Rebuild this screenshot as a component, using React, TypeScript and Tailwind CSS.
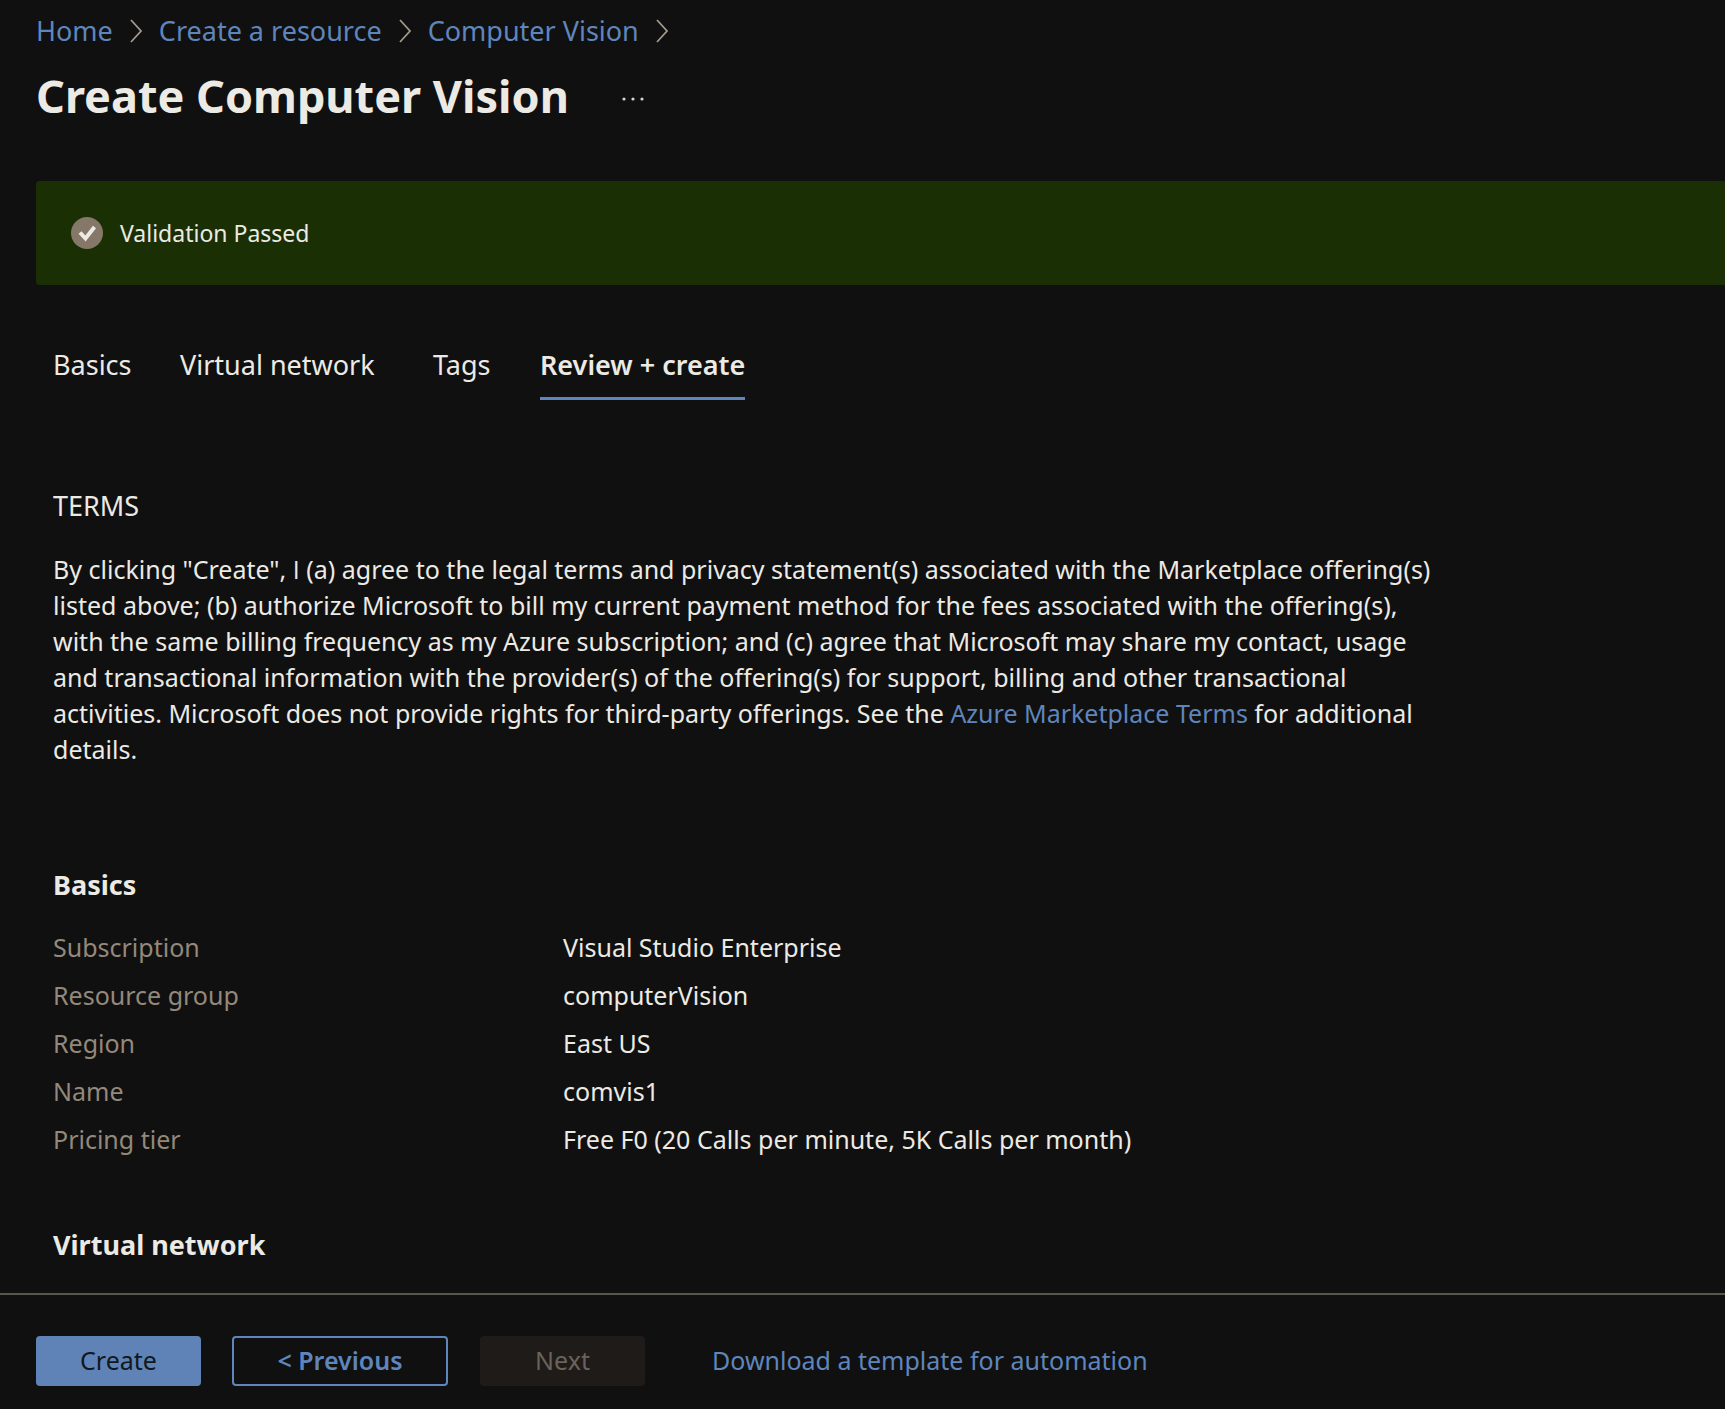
import React from "react";

const crumbs = ["Home", "Create a resource", "Computer Vision"];

const tabs = [
  { label: "Basics", cell: "w-[127px]" },
  { label: "Virtual network", cell: "w-[253px]" },
  { label: "Tags", cell: "w-[107px]" },
  { label: "Review + create", cell: "" },
];

const basics = [
  ["Subscription", "Visual Studio Enterprise"],
  ["Resource group", "computerVision"],
  ["Region", "East US"],
  ["Name", "comvis1"],
  ["Pricing tier", "Free F0 (20 Calls per minute, 5K Calls per month)"],
];

function Chevron() {
  return (
    <svg className="mx-[17px] h-6 w-3 shrink-0" viewBox="0 0 12 24" fill="none" stroke="#a3998c" strokeWidth="1.8" aria-hidden="true">
      <path d="M1 1 L11 12 L1 23" />
    </svg>
  );
}

export default function App() {
  return (
    <div className="flex min-h-screen flex-col bg-[#101010] font-['Noto_Sans','Open_Sans',sans-serif] text-[25px] text-[#eceae4]">
      <header className="pl-9">
        <nav aria-label="Breadcrumb" className="pt-[11px]">
          <ol className="flex items-center text-[27px] leading-10 text-[#5f86bc]">
            {crumbs.map((c) => (
              <li key={c} className="flex items-center">
                <a href="#" className="whitespace-nowrap">{c}</a>
                <Chevron />
              </li>
            ))}
          </ol>
        </nav>
        <div className="flex items-center pt-[17px]">
          <h1 className="text-[45px] leading-14 font-bold whitespace-nowrap">Create Computer Vision</h1>
          <button type="button" aria-label="More actions" className="mt-1 ml-12 p-1">
            <svg className="h-4 w-6" viewBox="0 0 24 16" fill="#d8d4cc" aria-hidden="true">
              <circle cx="3" cy="9" r="1.6" />
              <circle cx="12" cy="9" r="1.6" />
              <circle cx="21" cy="9" r="1.6" />
            </svg>
          </button>
        </div>
        <div role="status" className="mt-[57px] flex h-26 items-center gap-[17px] rounded-l-sm bg-[#1a3004] pl-[35px] text-[23px]">
          <svg className="size-8" viewBox="0 0 32 32" aria-hidden="true">
            <circle cx="16" cy="16" r="16" fill="#857868" />
            <path d="M9 15.5 L14.5 21.5 L23.5 10" fill="none" stroke="#eceae4" strokeWidth="4" />
          </svg>
          <span>Validation Passed</span>
        </div>
      </header>

      <main className="flex-1 px-[53px]">
        <div role="tablist" className="flex pt-15 text-[27px] leading-10">
          {tabs.map((t, i) => (
            <div key={t.label} role="presentation" className={t.cell}>
              <button
                type="button"
                role="tab"
                aria-selected={i === 3}
                className={
                  i === 3
                    ? "border-b-3 border-[#5f86bc] pb-3 font-semibold whitespace-nowrap"
                    : "border-b-3 border-transparent pb-3 whitespace-nowrap"
                }
              >
                {t.label}
              </button>
            </div>
          ))}
        </div>

        <section className="pt-[86px]">
          <h2 className="text-[27px] leading-10">TERMS</h2>
          <p className="max-w-[1395px] pt-[25px] leading-9">
            By clicking "Create", <span className="font-['Open_Sans',sans-serif]">I</span> (a) agree to the legal terms and privacy statement(s) associated with the Marketplace offering(s)
            listed above; (b) authorize Microsoft to bill my current payment method for the fees associated with the offering(s),
            with the same billing frequency as my Azure subscription; and (c) agree that Microsoft may share my contact, usage
            and transactional information with the provider(s) of the offering(s) for support, billing and other transactional
            activities. Microsoft does not provide rights for third-party offerings. See the{" "}
            <a href="#" className="text-[#5f86bc]">Azure Marketplace Terms</a> for additional details.
          </p>
        </section>

        <section className="pt-[98px]">
          <h2 className="text-[27px] leading-10 font-bold">Basics</h2>
          <dl className="pt-[19px]">
            {basics.map(([k, v]) => (
              <div key={k} className="flex h-12 items-center">
                <dt className="w-[510px] text-[#94887b]">{k}</dt>
                <dd>{v}</dd>
              </div>
            ))}
          </dl>
        </section>

        <section className="pt-[61px] pb-7">
          <h2 className="text-[27px] leading-10 font-bold">Virtual network</h2>
        </section>
      </main>

      <footer className="sticky bottom-0 flex items-center border-t-2 border-[#59554f] bg-[#101010] pt-[41px] pb-[23px] pl-9">
        <button type="button" className="h-[50px] w-[165px] rounded-sm bg-[#5f83b6] text-[#101820]">Create</button>
        <button type="button" className="ml-[31px] h-[50px] w-[216px] rounded-sm border-2 border-[#5f86bc] font-semibold text-[#5f86bc]">&lt; Previous</button>
        <button type="button" disabled className="ml-8 h-[50px] w-[165px] rounded-sm bg-[#1e1b19] text-[#6b625a]">Next</button>
        <a href="#" className="ml-[67px] whitespace-nowrap text-[#5f86bc]">Download a template for automation</a>
      </footer>
    </div>
  );
}
